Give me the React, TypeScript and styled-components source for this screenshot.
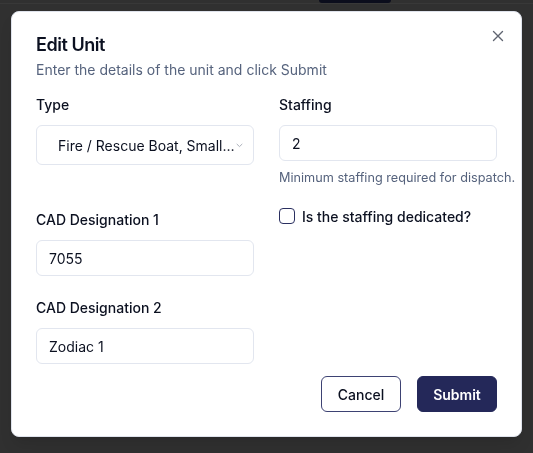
import React from 'react';
import styled, { createGlobalStyle } from 'styled-components';

const Global = createGlobalStyle`
  html, body { margin: 0; padding: 0; }
  body {
    width: 533px;
    height: 453px;
    overflow: hidden;
    background: #303030;
    font-family: Inter, "Noto Sans", sans-serif;
    -webkit-font-smoothing: antialiased;
  }
  * { box-sizing: border-box; }
`;

const Page = styled.div`
  width: 533px;
  height: 453px;
  background: #303030;
`;

const PageTop = styled.div`
  height: 4px;
  display: flex;
  border-bottom: 1px solid #383838;
  padding-left: 319px;
`;

const DarkPill = styled.div`
  width: 72px;
  height: 3px;
  background: #0b0d1c;
  border-radius: 0 0 6px 6px;
`;

const Overlay = styled.div`
  position: fixed;
  inset: 0;
  display: flex;
  justify-content: center;
  align-items: flex-start;
  padding-top: 11px;
`;

const Dialog = styled.div`
  position: relative;
  width: 511px;
  background: #ffffff;
  border: 1px solid #dfe3ec;
  border-radius: 8px;
  padding: 24px;
  box-shadow: 0 10px 15px -3px rgba(0,0,0,0.1), 0 4px 6px -4px rgba(0,0,0,0.1);
`;

const CloseButton = styled.button`
  position: absolute;
  top: 18px;
  right: 17px;
  width: 12px;
  height: 12px;
  padding: 0;
  border: none;
  background: transparent;
  display: flex;
  align-items: center;
  justify-content: center;
  color: #5f6470;
`;

const Header = styled.div`
  display: flex;
  flex-direction: column;
  gap: 6px;
`;

const Title = styled.h2`
  margin: 0;
  font-size: 18px;
  line-height: 18px;
  font-weight: 600;
  letter-spacing: -0.45px;
  color: #0b1020;
`;

const Description = styled.p`
  margin: 0;
  font-size: 14px;
  line-height: 20px;
  color: #56637d;
`;

const FormGrid = styled.div`
  margin-top: 15px;
  display: grid;
  grid-template-columns: minmax(0, 1fr) minmax(0, 1fr);
  column-gap: 25px;
  row-gap: 23px;
`;

const Field = styled.div<{ $shift?: number }>`
  display: flex;
  flex-direction: column;
  margin-top: ${(p) => p.$shift ?? 0}px;
`;

const Label = styled.label`
  font-size: 14px;
  line-height: 20px;
  font-weight: 500;
  color: #0b1020;
  margin-bottom: 10px;
`;

const Input = styled.input`
  height: 36px;
  width: 100%;
  border: 1px solid #e2e6ef;
  border-radius: 6px;
  padding: 0 12px;
  font-family: inherit;
  font-size: 14px;
  color: #0b1020;
  background: #fff;
  outline: none;
`;

const SelectBox = styled.div`
  height: 40px;
  border: 1px solid #e2e6ef;
  border-radius: 6px;
  display: flex;
  align-items: center;
  padding-left: 21px;
  gap: 1px;
  font-size: 14px;
  color: #0b1020;
`;

const SelectText = styled.span`
  white-space: nowrap;
`;

const Helper = styled.p`
  margin: 8px 0 0;
  font-size: 12.7px;
  line-height: 18px;
  color: #56637d;
  white-space: nowrap;
`;

const CheckRow = styled.label`
  display: flex;
  align-items: center;
  gap: 7px;
  height: 16px;
  margin-top: -2px;
  font-size: 14px;
  font-weight: 500;
  color: #0b1020;
`;

const CheckBox = styled.span`
  width: 16px;
  height: 16px;
  border: 1px solid #2a2f60;
  border-radius: 4px;
  flex-shrink: 0;
`;

const Footer = styled.div`
  margin-top: 12px;
  display: flex;
  justify-content: flex-end;
  gap: 16px;
`;

const Button = styled.button<{ $primary?: boolean }>`
  width: 80px;
  height: 36px;
  border-radius: 6px;
  font-family: inherit;
  font-size: 14px;
  font-weight: ${(p) => (p.$primary ? 600 : 500)};
  border: 1px solid ${(p) => (p.$primary ? '#242859' : '#3d4273')};
  background: ${(p) => (p.$primary ? '#242859' : '#ffffff')};
  color: ${(p) => (p.$primary ? '#ffffff' : '#0b1020')};
`;

export default function App() {
  return (
    <>
      <Global />
      <Page>
        <PageTop>
          <DarkPill />
        </PageTop>
      </Page>
      <Overlay>
        <Dialog>
          <CloseButton aria-label="Close">
            <svg width="12" height="12" viewBox="0 0 12 12" fill="none">
              <path d="M1.5 1.5 L10.5 10.5 M10.5 1.5 L1.5 10.5" stroke="currentColor" strokeWidth="1.3" strokeLinecap="round" />
            </svg>
          </CloseButton>
          <Header>
            <Title>Edit Unit</Title>
            <Description>Enter the details of the unit and click Submit</Description>
          </Header>
          <FormGrid>
            <Field>
              <Label>Type</Label>
              <SelectBox>
                <SelectText>Fire / Rescue Boat, Small…</SelectText>
                <svg width="7" height="5" viewBox="0 0 7 5" fill="none">
                  <path d="M1 1.2 L3.5 3.6 L6 1.2" stroke="#a3a8b3" strokeWidth="0.9" strokeLinecap="round" strokeLinejoin="round" />
                </svg>
              </SelectBox>
            </Field>
            <Field>
              <Label>Staffing</Label>
              <Input defaultValue="2" />
              <Helper>Minimum staffing required for dispatch.</Helper>
            </Field>
            <Field>
              <Label>CAD Designation 1</Label>
              <Input defaultValue="7055" />
            </Field>
            <Field>
              <CheckRow>
                <CheckBox />
                Is the staffing dedicated?
              </CheckRow>
            </Field>
            <Field $shift={-1}>
              <Label>CAD Designation 2</Label>
              <Input defaultValue="Zodiac 1" />
            </Field>
          </FormGrid>
          <Footer>
            <Button>Cancel</Button>
            <Button $primary>Submit</Button>
          </Footer>
        </Dialog>
      </Overlay>
    </>
  );
}
